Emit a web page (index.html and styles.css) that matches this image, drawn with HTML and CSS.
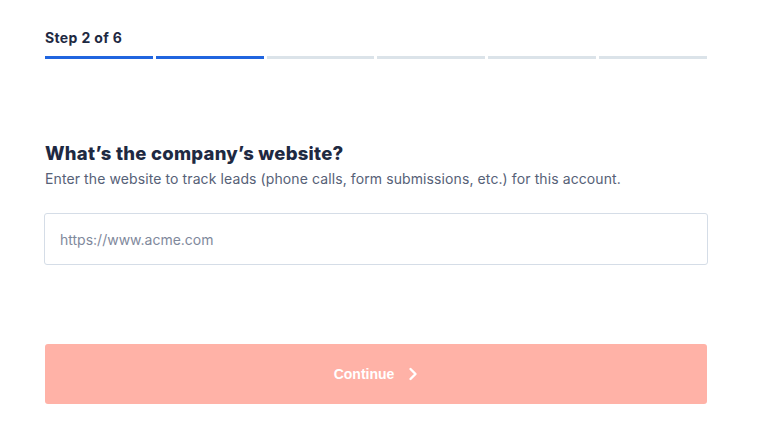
FILE: index.html
```html
<!DOCTYPE html>
<html>
<head>
<meta charset="utf-8">
<link rel="stylesheet" href="styles.css">
</head>
<body>
<main class="wizard">
  <div class="step-label">Step 2 of 6</div>
  <div class="progress">
    <span class="seg done"></span>
    <span class="seg done"></span>
    <span class="seg"></span>
    <span class="seg"></span>
    <span class="seg"></span>
    <span class="seg"></span>
  </div>
  <h1 class="title">What’s the company’s website?</h1>
  <p class="subtitle">Enter the website to track leads (phone calls, form submissions, etc.) for this account.</p>
  <input class="field" type="text" placeholder="https://www.acme.com">
  <button class="continue" type="button">
    <span>Continue</span>
    <svg class="chev" width="10" height="14" viewBox="0 0 10 14"><path d="M2.5 2 L7.5 7 L2.5 12" fill="none" stroke="#fff" stroke-width="2.4" stroke-linecap="round" stroke-linejoin="round"/></svg>
  </button>
</main>
</body>
</html>
```

FILE: styles.css
```css
* { box-sizing: border-box; }
html, body { margin: 0; padding: 0; background: #fff; }
body { font-family: Inter, "Noto Sans", sans-serif; }

.wizard {
  width: 662px;
  margin-left: 45px;
  padding-top: 29px;
  display: flex;
  flex-direction: column;
}

.step-label {
  font-size: 14px;
  font-weight: 700;
  color: #1e2942;
  line-height: 18px;
  letter-spacing: 0.35px;
}

.progress {
  display: flex;
  gap: 3px;
  margin-top: 9px;
}
.seg {
  flex: 1;
  height: 3px;
  background: #dbe3e9;
}
.seg.done { background: #2065df; }

.title {
  margin: 82px 0 0;
  font-size: 18.5px;
  font-weight: 800;
  color: #1e2942;
  line-height: 24px;
  letter-spacing: 0.25px;
}

.subtitle {
  margin: 4px 0 0;
  font-size: 14px;
  color: #566177;
  line-height: 20px;
  letter-spacing: 0.1px;
}

.field {
  margin-top: 24px;
  margin-left: -1px;
  width: 664px;
  height: 52px;
  border: 1px solid #d5dde7;
  border-radius: 3px;
  padding: 0 15px;
  font-family: Inter, "Noto Sans", sans-serif;
  font-size: 14px;
  color: #1e2942;
  outline: none;
}
.field::placeholder { color: #7f899c; }

.continue {
  margin-top: 79px;
  height: 60px;
  border: none;
  border-radius: 3px;
  background: #ffb2a7;
  color: #fff;
  font-family: "Liberation Sans", Arial, sans-serif;
  font-weight: 700;
  font-size: 14px;
  display: flex;
  align-items: center;
  justify-content: center;
  gap: 14px;
  padding: 0 0 1px;
}
.chev { display: block; }
```
